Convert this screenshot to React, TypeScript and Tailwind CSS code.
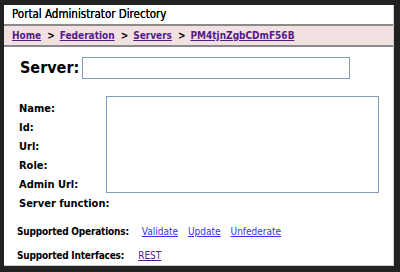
import React from "react";

const font = { fontFamily: '"DejaVu Sans Condensed", "DejaVu Sans", sans-serif' };

export default function App() {
  return (
    <div
      className="w-[400px] h-[272px] bg-[#222222] pt-[5px] pl-[4px] pr-[6px] pb-[6px]"
      style={font}
    >
      <div className="h-full bg-white flex flex-col border-r border-b border-[#cfcfcf]">
        <div className="h-[19px] pl-[8px] flex items-center text-[11.5px] text-black [text-shadow:0_0_0.3px_#000]">
          Portal Administrator Directory
        </div>
        <div className="border-t-2 border-b-2 border-[#8a8a8a] bg-[#f2e1e1] h-[23px] pl-[8px] flex items-center text-[10px] font-bold text-black">
          <a href="#" className="text-[#551a8b] underline">Home</a>
          <span className="ml-[6px] mr-[5px]">&gt;</span>
          <a href="#" className="text-[#551a8b] underline">Federation</a>
          <span className="ml-[6px] mr-[5px]">&gt;</span>
          <a href="#" className="text-[#551a8b] underline">Servers</a>
          <span className="ml-[6px] mr-[5px]">&gt;</span>
          <a href="#" className="text-[#551a8b] underline">PM4tjnZgbCDmF56B</a>
        </div>
        <div className="flex items-center pl-[16px] mt-[9px]">
          <span className="text-[16px] font-bold text-black">Server:</span>
          <div className="ml-[3px] w-[268px] h-[22px] border border-[#7f9db9]" />
        </div>
        <div className="flex items-start mt-[16px]">
          <div className="pl-[15px] w-[102px] mt-[3px] flex flex-col text-[11px] font-bold text-black leading-[19px]">
            <span>Name:</span>
            <span>Id:</span>
            <span>Url:</span>
            <span>Role:</span>
            <span>Admin Url:</span>
            <span className="whitespace-nowrap">Server function:</span>
          </div>
          <div className="w-[273px] h-[97px] border border-[#7f9db9]" />
        </div>
        <div className="flex items-center pl-[13px] mt-[11px] text-[10px]">
          <span className="font-bold text-black tracking-[-0.2px]">Supported Operations:</span>
          <a href="#" className="ml-[13px] text-[#3333ee] underline">Validate</a>
          <a href="#" className="ml-[10px] text-[#3333ee] underline">Update</a>
          <a href="#" className="ml-[10px] text-[#3333ee] underline">Unfederate</a>
        </div>
        <div className="flex items-center pl-[13px] mt-[9px] text-[10px]">
          <span className="font-bold text-black tracking-[-0.2px]">Supported Interfaces:</span>
          <a href="#" className="ml-[14px] text-[#551a8b] underline">REST</a>
        </div>
      </div>
    </div>
  );
}
